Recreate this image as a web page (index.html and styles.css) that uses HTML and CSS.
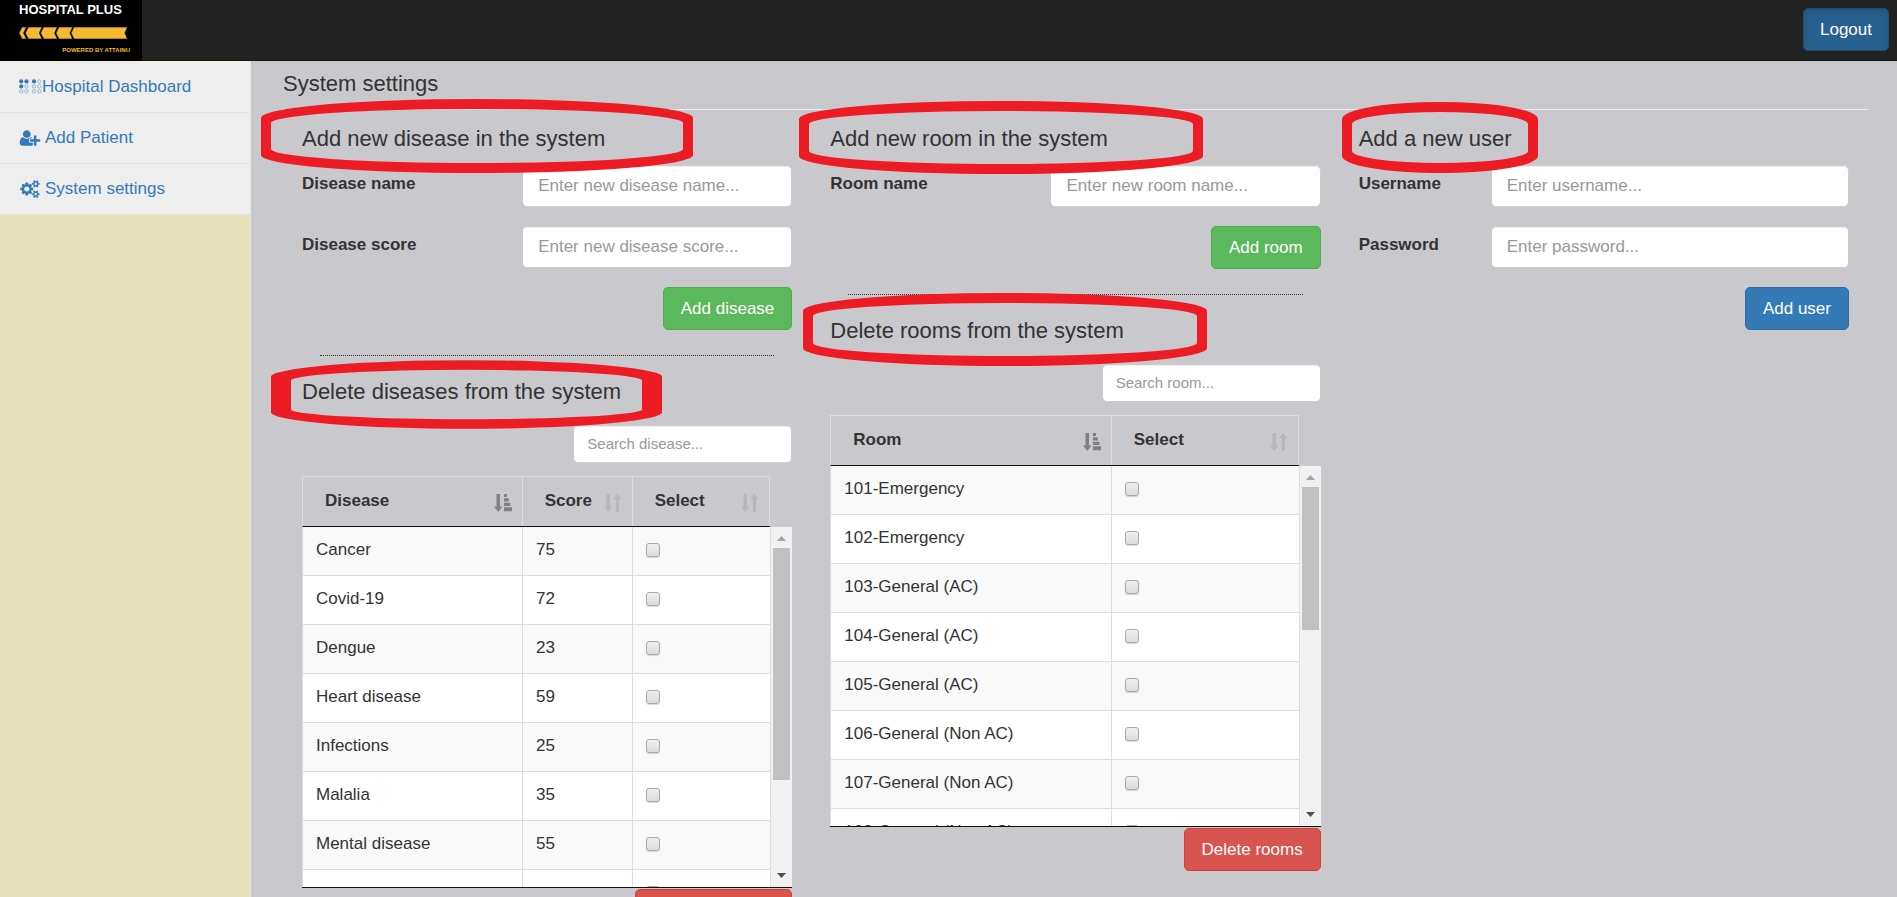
FILE: index.html
```html
<!DOCTYPE html>
<html lang="en">
<head>
<meta charset="utf-8">
<title>Hospital Plus - System settings</title>
<link rel="stylesheet" href="styles.css">
</head>
<body>
<svg class="defs" aria-hidden="true">
  <symbol id="sort-asc" viewBox="0 0 18 18"><path d="M2.5 0h3.5v12.5h2.6L4.3 18 0 12.5h2.5zM10 0h3v3h-3zM10 4.300h4.800v3.200H10zM10 8.700h6.400v3.200H10zM10 13.200h8v4h-8z"/></symbol>
  <symbol id="sort-both" viewBox="0 0 18 18"><path d="M2.5 0h3.3v12.5h2.6L4.2 18 0 12.5h2.5zM11.9 18V5.3H9L13.3 0l4.4 5.3H15V18z"/></symbol>
</svg>

<header class="navbar">
  <a class="brand" href="#" aria-label="Hospital Plus">
    <span class="brand-name">HOSPITAL PLUS</span>
    <svg class="brand-arrow" viewBox="0 0 109 12" aria-hidden="true"><path fill="#f4ba31" stroke="#000" stroke-width=".6" d="M3 0h4.5L4.6 6l2.9 6H3L0 6zM9.3 0h13.8l-2.8 6 2.8 6H9.3L6.3 6zM24.6 0h13.8l-2.8 6 2.8 6H24.6l-3-6zM39.9 0h13.8l-2.8 6 2.8 6H39.9l-3-6zM55 0h53.5l-2.6 6 2.6 6H55l-3-6z"/></svg>
    <span class="brand-sub">POWERED BY ATTAINU</span>
  </a>
  <button class="btn btn-logout" type="button">Logout</button>
</header>

<div class="layout">
  <nav class="sidebar">
    <ul class="menu">
      <li><a href="#"><svg class="icon-braille" viewBox="0 0 23 15" aria-hidden="true"><g fill="#337ab7"><circle cx="2.2" cy="2.4" r="2.1"/><circle cx="7.5" cy="2.4" r="2.1"/><circle cx="2.2" cy="7.4" r="2.1"/><circle cx="15" cy="2.4" r="2.1"/></g><g fill="none" stroke="#7fa9cf" stroke-width=".8"><circle cx="7.5" cy="7.4" r="1.7"/><circle cx="2.2" cy="12.4" r="1.7"/><circle cx="7.5" cy="12.4" r="1.7"/><circle cx="20.3" cy="2.4" r="1.7"/><circle cx="15" cy="7.4" r="1.7"/><circle cx="20.3" cy="7.4" r="1.7"/><circle cx="15" cy="12.4" r="1.7"/><circle cx="20.3" cy="12.4" r="1.7"/></g></svg>Hospital Dashboard</a></li>
      <li><a href="#"><svg class="icon-menu" viewBox="0 0 2048 1792" aria-hidden="true"><path fill="#337ab7" d="M704 896q-159 0-271.5-112.5t-112.5-271.5 112.5-271.5 271.5-112.5 271.5 112.5 112.5 271.5-112.5 271.5-271.5 112.5zm960 128h352q13 0 22.5 9.5t9.5 22.5v192q0 13-9.5 22.5t-22.5 9.5h-352v352q0 13-9.5 22.5t-22.5 9.5h-192q-13 0-22.5-9.5t-9.5-22.5v-352h-352q-13 0-22.5-9.5t-9.5-22.5v-192q0-13 9.5-22.5t22.5-9.5h352v-352q0-13 9.5-22.5t22.5-9.5h192q13 0 22.5 9.5t9.5 22.5v352zm-736 224q0 52 38 90t90 38h256v238q-68 50-171 50h-874q-121 0-194-69t-73-190q0-53 3.5-103.5t14-109 26.5-108.5 43-97.5 62-81 85.5-53.5 111.5-20q19 0 39 17 79 61 154.5 91.5t164.5 30.5 164.5-30.5 154.5-91.5q20-17 39-17 132 0 217 96h-223q-52 0-90 38t-38 90v192z"/></svg> Add Patient</a></li>
      <li><a href="#"><svg class="icon-menu" viewBox="-64 -256 2048 1792" aria-hidden="true"><path fill="#337ab7" d="M896 640q0-106-75-181t-181-75-181 75-75 181 75 181 181 75 181-75 75-181zm768 512q0-52-38-90t-90-38-90 38-38 90q0 53 37.500 90.500t90.500 37.500 90.500-37.500 37.500-90.500zm0-1024q0-52-38-90t-90-38-90 38-38 90q0 53 37.500 90.500t90.500 37.500 90.500-37.500 37.500-90.500zm-384 421v185q0 10-7 19.500t-16 10.500l-155 24q-11 35-32 76 34 48 90 115 7 11 7 20 0 12-7 19-23 30-82.500 89.500t-78.500 59.500q-11 0-21-7l-115-90q-37 19-77 31-11 108-23 155-7 24-30 24h-186q-11 0-20-7.500t-10-17.500l-23-153q-34-10-75-31l-118 89q-7 7-20 7-11 0-21-8-144-133-144-160 0-9 7-19 10-14 41-53t47-61q-23-44-35-82l-152-24q-10-1-17-9.500t-7-19.500v-185q0-10 7-19.500t16-10.500l155-24q11-35 32-76-34-48-90-115-7-11-7-20 0-12 7-20 22-30 82-89t79-59q11 0 21 7l115 90q34-18 77-32 11-108 23-154 7-24 30-24h186q11 0 20 7.500t10 17.500l23 153q34 10 75 31l118-89q8-7 20-7 11 0 21 8 144 133 144 160 0 8-7 19-12 16-42 54t-45 60q23 48 34 82l152 23q10 2 17 10.500t7 19.500zm640 533v140q0 16-149 31-12 27-30 52 51 113 51 138 0 4-4 7-122 71-124 71-8 0-46-47t-52-68q-20 2-30 2t-30-2q-14 21-52 68t-46 47q-2 0-124-71-4-3-4-7 0-25 51-138-18-25-30-52-149-15-149-31v-140q0-16 149-31 13-29 30-52-51-113-51-138 0-4 4-7 4-2 35-20t59-34 30-16q8 0 46 46.500t52 67.500q20-2 30-2t30 2q51-71 92-112l6-2q4 0 124 70 4 3 4 7 0 25-51 138 17 23 30 52 149 15 149 31zm0-1024v140q0 16-149 31-12 27-30 52 51 113 51 138 0 4-4 7-122 71-124 71-8 0-46-47t-52-68q-20 2-30 2t-30-2q-14 21-52 68t-46 47q-2 0-124-71-4-3-4-7 0-25 51-138-18-25-30-52-149-15-149-31v-140q0-16 149-31 13-29 30-52-51-113-51-138 0-4 4-7 4-2 35-20t59-34 30-16q8 0 46 46.500t52 67.500q20-2 30-2t30 2q51-71 92-112l6-2q4 0 124 70 4 3 4 7 0 25-51 138 17 23 30 52 149 15 149 31z"/></svg> System settings</a></li>
    </ul>
  </nav>

  <main class="content">
    <h1 class="title page-title">System settings</h1>
    <div class="columns">

      <section class="column">
        <h2 class="title marked">Add new disease in the system
          <svg class="ring ring-disease" viewBox="0 0 432 74" aria-hidden="true"><path fill="#ed1c24" fill-rule="evenodd" d="M0 19A216 19 0 0 1 432 19V56A216 18 0 0 1 0 56zM10 24V50A206 14 0 0 0 422 50V24A206 14 0 0 0 10 24z"/></svg>
        </h2>
        <form class="form">
          <div class="field"><label for="disease-name">Disease name</label><input id="disease-name" type="text" placeholder="Enter new disease name..."></div>
          <div class="field"><label for="disease-score">Disease score</label><input id="disease-score" type="text" placeholder="Enter new disease score..."></div>
          <button class="btn btn-green" type="button">Add disease</button>
        </form>
        <hr class="divider">
        <h2 class="title marked">Delete diseases from the system
          <svg class="ring ring-delete-disease" viewBox="0 0 391 71" aria-hidden="true"><path fill="#ed1c24" fill-rule="evenodd" d="M0 17A196 17 0 0 1 391 17V54A196 17 0 0 1 0 54zM20 21V51A176 10 0 0 0 371 51V21A176 11 0 0 0 20 21z"/></svg>
        </h2>
        <div class="search"><input type="text" aria-label="Search disease" placeholder="Search disease..."></div>
        <div class="grid-head">
          <table class="table disease-table">
            <colgroup><col class="c-name"><col class="c-score"><col class="c-select"></colgroup>
            <thead><tr>
              <th><span>Disease</span><svg class="sort sort-on"><use href="#sort-asc"/></svg></th>
              <th><span>Score</span><svg class="sort"><use href="#sort-both"/></svg></th>
              <th><span>Select</span><svg class="sort"><use href="#sort-both"/></svg></th>
            </tr></thead>
          </table>
        </div>
        <div class="grid-body">
          <div class="grid-rows">
            <table class="table disease-table">
              <colgroup><col class="c-name"><col class="c-score"><col class="c-select"></colgroup>
              <tbody>
                <tr><td>Cancer</td><td>75</td><td><input type="checkbox" aria-label="Select Cancer"></td></tr>
                <tr><td>Covid-19</td><td>72</td><td><input type="checkbox" aria-label="Select Covid-19"></td></tr>
                <tr><td>Dengue</td><td>23</td><td><input type="checkbox" aria-label="Select Dengue"></td></tr>
                <tr><td>Heart disease</td><td>59</td><td><input type="checkbox" aria-label="Select Heart disease"></td></tr>
                <tr><td>Infections</td><td>25</td><td><input type="checkbox" aria-label="Select Infections"></td></tr>
                <tr><td>Malalia</td><td>35</td><td><input type="checkbox" aria-label="Select Malalia"></td></tr>
                <tr><td>Mental disease</td><td>55</td><td><input type="checkbox" aria-label="Select Mental disease"></td></tr>
                <tr><td></td><td></td><td><input type="checkbox" aria-label="Select row"></td></tr>
              </tbody>
            </table>
          </div>
          <div class="scrollbar" aria-hidden="true">
            <svg class="scroll-arrow" viewBox="0 0 21 21"><path fill="#a3a3a3" d="M6 14l4.500-5 4.500 5z"/></svg>
            <div class="scroll-track"><div class="scroll-thumb thumb-disease"></div></div>
            <svg class="scroll-arrow" viewBox="0 0 21 21"><path fill="#505050" d="M6 7l4.500 5L15 7z"/></svg>
          </div>
        </div>
        <div class="actions"><button class="btn btn-red" type="button">Delete diseases</button></div>
      </section>

      <section class="column">
        <h2 class="title marked">Add new room in the system
          <svg class="ring ring-room" viewBox="0 0 404 73" aria-hidden="true"><path fill="#ed1c24" fill-rule="evenodd" d="M0 18A202 18 0 0 1 404 18V55A202 18 0 0 1 0 55zM10 23V50A192 13 0 0 0 394 50V23A192 13 0 0 0 10 23z"/></svg>
        </h2>
        <form class="form">
          <div class="field"><label for="room-name">Room name</label><input id="room-name" type="text" placeholder="Enter new room name..."></div>
          <button class="btn btn-green" type="button">Add room</button>
        </form>
        <hr class="divider">
        <h2 class="title marked">Delete rooms from the system
          <svg class="ring ring-delete-room" viewBox="0 0 404 73" aria-hidden="true"><path fill="#ed1c24" fill-rule="evenodd" d="M0 18A202 18 0 0 1 404 18V55A202 18 0 0 1 0 55zM10 23V50A192 13 0 0 0 394 50V23A192 13 0 0 0 10 23z"/></svg>
        </h2>
        <div class="search"><input type="text" aria-label="Search room" placeholder="Search room..."></div>
        <div class="grid-head">
          <table class="table room-table">
            <colgroup><col class="c-name"><col class="c-select"></colgroup>
            <thead><tr>
              <th><span>Room</span><svg class="sort sort-on"><use href="#sort-asc"/></svg></th>
              <th><span>Select</span><svg class="sort"><use href="#sort-both"/></svg></th>
            </tr></thead>
          </table>
        </div>
        <div class="grid-body">
          <div class="grid-rows">
            <table class="table room-table">
              <colgroup><col class="c-name"><col class="c-select"></colgroup>
              <tbody>
                <tr><td>101-Emergency</td><td><input type="checkbox" aria-label="Select 101"></td></tr>
                <tr><td>102-Emergency</td><td><input type="checkbox" aria-label="Select 102"></td></tr>
                <tr><td>103-General (AC)</td><td><input type="checkbox" aria-label="Select 103"></td></tr>
                <tr><td>104-General (AC)</td><td><input type="checkbox" aria-label="Select 104"></td></tr>
                <tr><td>105-General (AC)</td><td><input type="checkbox" aria-label="Select 105"></td></tr>
                <tr><td>106-General (Non AC)</td><td><input type="checkbox" aria-label="Select 106"></td></tr>
                <tr><td>107-General (Non AC)</td><td><input type="checkbox" aria-label="Select 107"></td></tr>
                <tr><td>108-General (Non AC)</td><td><input type="checkbox" aria-label="Select 108"></td></tr>
              </tbody>
            </table>
          </div>
          <div class="scrollbar" aria-hidden="true">
            <svg class="scroll-arrow" viewBox="0 0 21 21"><path fill="#a3a3a3" d="M6 14l4.500-5 4.500 5z"/></svg>
            <div class="scroll-track"><div class="scroll-thumb thumb-room"></div></div>
            <svg class="scroll-arrow" viewBox="0 0 21 21"><path fill="#505050" d="M6 7l4.500 5L15 7z"/></svg>
          </div>
        </div>
        <div class="actions"><button class="btn btn-red" type="button">Delete rooms</button></div>
      </section>

      <section class="column">
        <h2 class="title marked">Add a new user
          <svg class="ring ring-user" viewBox="0 0 196 71" aria-hidden="true"><path fill="#ed1c24" fill-rule="evenodd" d="M0 17A98 17 0 0 1 196 17V54A98 17 0 0 1 0 54zM10 22V49A88 12 0 0 0 186 49V22A88 12 0 0 0 10 22z"/></svg>
        </h2>
        <form class="form">
          <div class="field field-user"><label for="username">Username</label><input id="username" type="text" placeholder="Enter username..."></div>
          <div class="field field-user"><label for="password">Password</label><input id="password" type="password" placeholder="Enter password..."></div>
          <button class="btn btn-blue" type="button">Add user</button>
        </form>
      </section>

    </div>
  </main>
</div>
</body>
</html>
```

FILE: styles.css
```css
* { box-sizing: border-box; }

body {
  margin: 0;
  height: 100vh;
  overflow: hidden;
  display: flex;
  flex-direction: column;
  font: 17px/25px "Liberation Sans", Arial, sans-serif;
  color: #333;
  background: #e6e1bb;
}

.defs { position: absolute; width: 0; height: 0; }

/* Top bar */
.navbar {
  flex: none;
  height: 61px;
  display: flex;
  justify-content: space-between;
  align-items: flex-start;
  padding-right: 8px;
  background: #222;
  border-bottom: 1px solid #151515;
}
.brand {
  width: 142px;
  height: 61px;
  padding: 0 12px 0 19px;
  display: flex;
  flex-direction: column;
  background: #000;
  text-decoration: none;
  white-space: nowrap;
  font-family: "Liberation Sans Narrow", "Liberation Sans", Arial, sans-serif;
  font-weight: bold;
}
.brand-name { color: #fff; font-size: 13px; line-height: 20px; }
.brand-arrow { width: 109px; height: 12px; margin-top: 7px; }
.brand-sub { color: #f4ba31; font-size: 6px; line-height: 12px; margin-top: 5px; text-align: right; }

/* Buttons */
.btn {
  height: 43px;
  padding: 0 17px 1px;
  border: 1px solid;
  border-radius: 5px;
  color: #fff;
  font: inherit;
  white-space: nowrap;
}
.btn-green { background: #5cb85c; border-color: #4cae4c; }
.btn-blue { background: #337ab7; border-color: #2e6da4; }
.btn-red { background: #d9534f; border-color: #d43f3a; }
.btn-logout {
  margin-top: 8px;
  padding: 0 16px 1px;
  background: #286090;
  border-color: #204d74;
  box-shadow: inset 0 4px 6px rgba(0, 0, 0, .125);
}

/* Page layout */
.layout { flex: 1; min-height: 0; display: flex; }
.sidebar { flex: none; width: 251px; border-right: 1px solid #e7e7e7; }
.menu { list-style: none; margin: 0; padding: 0; border-top: 1px solid #f5edcf; background: #eee; }
.menu li { border-bottom: 1px solid #e2e2e2; }
.menu a {
  display: flex;
  align-items: center;
  padding: 12px 19px 13px;
  color: #337ab7;
  text-decoration: none;
}
.icon-braille { width: 23px; height: 15px; }
.icon-menu { width: 22px; height: 18px; margin-right: 4px; }

.content { flex: 1; min-width: 0; padding: 11px 29px 0 32px; background: #c9c8cd; }
.title { margin: 0; font-size: 22px; line-height: 24px; font-weight: normal; }
.page-title { padding-bottom: 13px; border-bottom: 1px solid #eee; }
.columns { display: grid; grid-template-columns: repeat(3, 1fr); }
.column { padding: 17px 19px 0; min-width: 0; }

/* Red outlines around the headings */
.marked { position: relative; z-index: 1; white-space: nowrap; }
.ring { position: absolute; pointer-events: none; }
.ring-disease { left: -41px; top: -28px; width: 432px; height: 74px; }
.ring-delete-disease { left: -31px; top: -21px; width: 391px; height: 71px; }
.ring-room { left: -31px; top: -26px; width: 404px; height: 73px; }
.ring-delete-room { left: -27px; top: -26px; width: 404px; height: 73px; }
.ring-user { left: -17px; top: -25px; width: 196px; height: 71px; }

/* Forms */
.form { margin-top: 14px; display: flex; flex-direction: column; gap: 19px; }
.form .btn { align-self: flex-end; }
.field { display: grid; grid-template-columns: 5fr 7fr; margin: 0 -19px; }
.field-user { grid-template-columns: 3fr 9fr; }
.field label { padding: 6px 0 0 19px; font-weight: bold; }
.field input { margin: 0 19px; height: 42px; min-width: 0; padding: 0 15px; }
input[type="text"], input[type="password"] {
  border: 1px solid #ccc;
  border-radius: 5px;
  background: #fff;
  box-shadow: inset 0 1px 1px rgba(0, 0, 0, .075);
  color: #555;
  font: inherit;
}
input::placeholder { color: #999; opacity: 1; }
.divider { margin: 25px 18px 24px; border: 0; border-top: 1px dotted #333; }
.search { margin: 21px 0 13px; display: flex; justify-content: flex-end; }
.search input[type="text"] { width: 219px; height: 38px; padding: 0 13px 2px; font-size: 15px; }

/* Data grids */
.table { width: 100%; border-collapse: separate; border-spacing: 0; table-layout: fixed; }
.disease-table .c-name { width: 47%; }
.disease-table .c-score { width: 110px; }
.room-table .c-name { width: 60%; }
.grid-head { margin-right: 22px; border: 1px solid #ddd; border-bottom-color: #111; border-right: 0; }
.table th {
  position: relative;
  height: 49px;
  padding: 0 0 2px 22px;
  border-right: 1px solid #ddd;
  text-align: left;
}
.sort { position: absolute; right: 10px; bottom: 14px; width: 18px; height: 18px; fill: #b7b6bb; }
.sort-on { fill: #808080; }
.grid-body { display: flex; height: 361px; border-bottom: 1px solid #111; }
.grid-rows { flex: 1; overflow: hidden; border-left: 1px solid #ddd; background: #fff; }
.table td { height: 49px; padding: 0 13px 3px; border-right: 1px solid #ddd; border-bottom: 1px solid #ddd; }
.table tbody tr:nth-child(odd) { background: #f9f9f9; }
.table input {
  appearance: none;
  display: block;
  width: 14px;
  height: 14px;
  margin: 0;
  border: 1px solid #aaa;
  border-radius: 3px;
  background: linear-gradient(#eee, #dcdcdc);
  box-shadow: 0 1px 1px rgba(0, 0, 0, .15);
}
.scrollbar { flex: none; width: 21px; display: flex; flex-direction: column; background: #f1f1f1; }
.scroll-arrow { flex: none; width: 21px; height: 21px; }
.scroll-track { flex: 1; padding: 0 2px; }
.scroll-thumb { background: #c1c1c1; }
.thumb-disease { height: 73%; }
.thumb-room { height: 45%; }
.actions { margin-top: 1px; display: flex; justify-content: flex-end; }
```
